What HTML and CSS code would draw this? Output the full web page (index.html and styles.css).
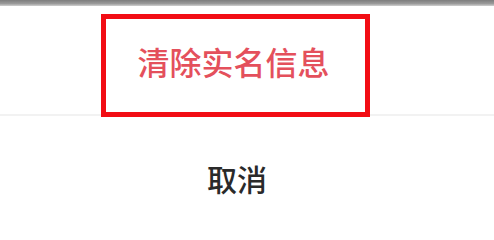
FILE: index.html
```html
<!DOCTYPE html>
<html lang="zh-CN">
<head>
<meta charset="utf-8">
<link rel="stylesheet" href="styles.css">
</head>
<body>
<div class="topbar"></div>
<div class="sheet">
  <div class="action-row">
    <div class="highlight">
      <span class="danger">清除实名信息</span>
    </div>
  </div>
  <div class="cancel-row">
    <span class="cancel">取消</span>
  </div>
</div>
</body>
</html>
```
FILE: styles.css
```css
html, body {
  margin: 0;
  padding: 0;
  background: #ffffff;
  width: 494px;
  height: 233px;
  overflow: hidden;
  font-family: "Noto Sans CJK SC", "Noto Sans", sans-serif;
}
.topbar {
  height: 6px;
  background: linear-gradient(#7d7d7d, #9a9a9a 60%, #d0d0d0);
}
.sheet {
  display: flex;
  flex-direction: column;
}
.action-row {
  height: 110px;
  display: flex;
  justify-content: center;
  align-items: flex-start;
  padding-top: 8px;
  padding-right: 23px;
  box-sizing: border-box;
  border-bottom: 2px solid #f2f2f2;
}
.highlight {
  width: 269px;
  height: 103px;
  box-sizing: border-box;
  border: 5px solid #f20d14;
  display: flex;
  justify-content: center;
  align-items: center;
  padding-bottom: 9px;
  padding-right: 4px;
}
.danger {
  color: #e4505c;
  font-size: 32px;
  font-weight: 500;
  line-height: 1;
}
.cancel-row {
  height: 115px;
  display: flex;
  justify-content: center;
  padding-top: 47px;
  padding-right: 20px;
  box-sizing: border-box;
}
.cancel {
  color: #2a2a2a;
  font-size: 30px;
  font-weight: 500;
  line-height: 1;
}
```
